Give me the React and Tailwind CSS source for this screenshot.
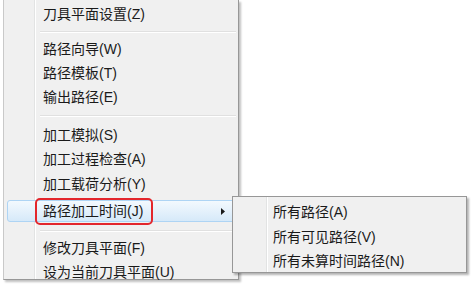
// Context menu with a cascading submenu (Windows 7 style)

const font = { fontFamily: '"Liberation Sans", "Noto Sans CJK SC", sans-serif' }

function Item({ text, h }) {
    return (
        <div className={`flex items-center pl-[39px] text-[14px] text-[#1a1a1a] ${h}`}>
            {text}
        </div>
    )
}

function Separator({ h }) {
    return (
        <div className={`flex flex-col justify-center pl-[36px] pr-[2px] ${h}`}>
            <div className="h-px bg-[#e0e0e0]" />
            <div className="h-px bg-white" />
        </div>
    )
}

function SubItem({ text, h }) {
    return (
        <div className={`flex items-center pl-[40px] text-[14px] text-[#1a1a1a] ${h}`}>
            {text}
        </div>
    )
}

export default function App() {
    return (
        <div className="relative w-[473px] h-[284px] bg-white overflow-hidden" style={font}>
            {/* main menu */}
            <div className="relative ml-[3px] w-[236px] h-[280px] bg-[#f0f0f0] border border-t-0 border-[#979797] border-l-[#c9c9c9] shadow-[2px_2px_2px_rgba(0,0,0,0.25)] pt-[2px]">
                {/* icon gutter divider */}
                <div className="absolute left-[30px] top-0 bottom-0 w-[2px] border-l border-[#e2e3e3] bg-white" />

                <Item text="刀具平面设置(Z)" h="h-[24px]" />
                <Separator h="h-[11px]" />
                <Item text="路径向导(W)" h="h-[24px]" />
                <Item text="路径模板(T)" h="h-[24px]" />
                <Item text="输出路径(E)" h="h-[24px]" />
                <Separator h="h-[14px]" />
                <Item text="加工模拟(S)" h="h-[24px]" />
                <Item text="加工过程检查(A)" h="h-[25px]" />
                <Item text="加工载荷分析(Y)" h="h-[25px]" />

                {/* highlighted row */}
                <div className="relative h-[28px] px-[3px] py-[3px]">
                    <div className="flex items-center h-full rounded-[3px] border border-[#aed4f4] bg-gradient-to-b from-[#f3f9fe] to-[#d6e9f9] pl-[35px] text-[14px] text-[#1a1a1a]">
                        路径加工时间(J)
                        <svg className="ml-auto mr-[9px]" width="4" height="7" viewBox="0 0 4 7">
                            <polygon points="0,0 4,3.5 0,7" fill="#1a1a1a" />
                        </svg>
                    </div>
                    <div className="absolute left-[31px] top-[1px] w-[118px] h-[27px] rounded-[5px] border-2 border-[#e3262c]" />
                </div>

                <Separator h="h-[11px]" />
                <Item text="修改刀具平面(F)" h="h-[24px]" />
                <Item text="设为当前刀具平面(U)" h="h-[25px]" />
            </div>

            {/* submenu */}
            <div className="absolute left-[232px] top-[196px] w-[235px] h-[77px] bg-[#f0f0f0] border border-[#979797] shadow-[2px_2px_2px_rgba(0,0,0,0.3)] pt-[3px]">
                <div className="absolute left-[33px] top-0 bottom-0 w-[2px] border-l border-[#e2e3e3] bg-white" />
                <SubItem text="所有路径(A)" h="h-[25px]" />
                <SubItem text="所有可见路径(V)" h="h-[25px]" />
                <SubItem text="所有未算时间路径(N)" h="h-[22px]" />
            </div>
        </div>
    )
}
